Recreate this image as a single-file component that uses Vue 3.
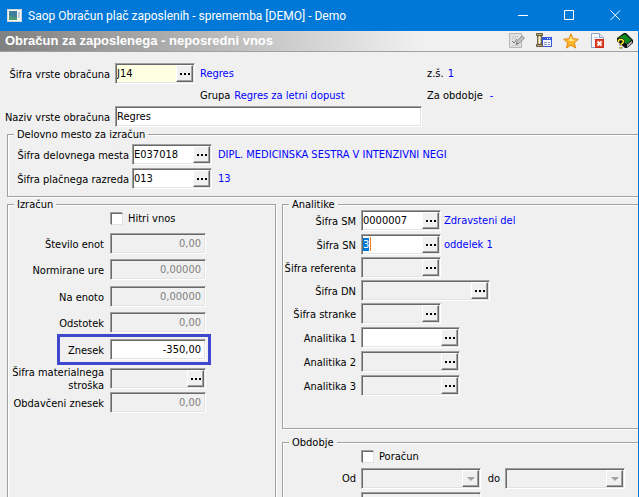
<script setup>
import { ref, onMounted } from 'vue'

const title = 'Saop Obračun plač zaposlenih - sprememba [DEMO] - Demo'

const workplace = ref([
  { id: 'place', label: 'Šifra delovnega mesta', value: 'E037018', info: 'DIPL. MEDICINSKA SESTRA V INTENZIVNI NEGI' },
  { id: 'grade', label: 'Šifra plačnega razreda', value: '013', info: '13' },
])

const amounts = ref([
  { id: 'units', label: 'Število enot', value: '0,00', off: true },
  { id: 'hours', label: 'Normirane ure', value: '0,00000', off: true },
  { id: 'per-unit', label: 'Na enoto', value: '0,00000', off: true },
  { id: 'percent', label: 'Odstotek', value: '0,00', off: true },
  { id: 'amount', label: 'Znesek', value: '-350,00', marked: true },
  { id: 'material', label: 'Šifra materialnega stroška', value: '', off: true, lookup: true },
  { id: 'taxed', label: 'Obdavčeni znesek', value: '0,00', off: true },
])

const analytics = ref([
  { id: 'sm', label: 'Šifra SM', value: '0000007', info: 'Zdravsteni del', size: 'short' },
  { id: 'sn', label: 'Šifra SN', value: '3', info: 'oddelek 1', size: 'short' },
  { id: 'clerk', label: 'Šifra referenta', value: '', off: true, size: 'short' },
  { id: 'dn', label: 'Šifra DN', value: '', off: true, size: 'long' },
  { id: 'client', label: 'Šifra stranke', value: '', off: true, size: 'short' },
  { id: 'a1', label: 'Analitika 1', value: '', size: 'medium' },
  { id: 'a2', label: 'Analitika 2', value: '', off: true, size: 'medium' },
  { id: 'a3', label: 'Analitika 3', value: '', off: true, size: 'medium' },
])

onMounted(() => {
  document.getElementById('sn')?.select()
})
</script>

<template>
  <main class="window">
    <header class="titlebar">
      <svg class="app-icon" viewBox="0 0 15 13" aria-hidden="true">
        <rect width="15" height="13" fill="#d8d8d8" />
        <rect x="1" y="1" width="13" height="11" fill="#f4f4f4" />
        <rect x="2" y="2" width="8" height="9" fill="#3f7f9a" />
        <path d="M2 11V6l3 2 5 1v2z" fill="#4f9a72" />
        <rect x="11" y="3" width="2" height="6" fill="#c4cdd3" />
      </svg>
      <span class="caption">{{ title }}</span>
      <button class="win-btn" type="button" aria-label="Minimiraj">
        <svg viewBox="0 0 11 11"><path d="M0 5.5h10" /></svg>
      </button>
      <button class="win-btn" type="button" aria-label="Maksimiraj">
        <svg viewBox="0 0 11 11"><path d="M.5 .5h9v9h-9z" /></svg>
      </button>
      <button class="win-btn" type="button" aria-label="Zapri">
        <svg viewBox="0 0 11 11"><path d="M.5 .5l9.500 9.500M10 .5L.5 10" /></svg>
      </button>
    </header>

    <div class="toolbar">
      <h1>Obračun za zaposlenega - neposredni vnos</h1>
      <button type="button" aria-label="Uredi" disabled>
        <svg viewBox="0 0 16 16">
          <path d="M.5 .5h12v14H.5z" fill="#e2e2e2" stroke="#b5b5b5" />
          <path d="M3 3.500h6M3 5.500h4M3 12.500h7" stroke="#c9c9c9" />
          <path d="M3 8l2 2 3-4" fill="none" stroke="#777" />
          <path d="M7 11.500l1-3L13 3l2.500 2L10 10.500z" fill="#c3c3c3" stroke="#8b8b8b" />
          <path d="M7 11.500l1-2 1 1z" fill="#666" />
        </svg>
      </button>
      <button type="button" aria-label="Nastavitve okna">
        <svg viewBox="0 0 16 16">
          <path d="M6.500 4.500h9v9h-9z" fill="#f4f7ff" stroke="#3355d8" />
          <path d="M6 4h10v3H6z" fill="#3157e0" />
          <path d="M11 5.500h1M13 5.500h1" stroke="#fff" />
          <path d="M8 9.500h3M8 11.500h3M12 9.500h2M12 11.500h2" stroke="#8a96b8" />
          <path d="M1.500 3h4v8h-4z" fill="#cfc4a2" stroke="#716545" />
          <path d="M.5 .5h6v2h-6zM.5 11.500h6v2h-6z" fill="#b9aa7c" stroke="#655a3c" />
          <path d="M3.500 3v8" stroke="#fff8df" />
        </svg>
      </button>
      <button type="button" aria-label="Priljubljene">
        <svg viewBox="0 0 16 16">
          <path d="M8 .8l2.100 4.900 5.300.5-4 3.500 1.200 5.300L8 12.200 3.400 15l1.200-5.300-4-3.500 5.300-.5z" fill="#ffb52b" stroke="#e28a1b" />
          <path d="M8 3l1.300 3.600 3.600.4-4 1.200L4 7l2.700-.4z" fill="#ffe98a" />
        </svg>
      </button>
      <button type="button" aria-label="Prekliči">
        <svg viewBox="0 0 16 16">
          <path d="M1.500 .5h8l4 4v10h-12z" fill="#f7f9fd" stroke="#93a3c4" />
          <path d="M9.500 .5v4h4" fill="#dfe6f3" stroke="#93a3c4" />
          <path d="M4 4.500h4M4 6.500h3" stroke="#bcc7dc" />
          <path d="M5.500 6.500h8v8h-8z" fill="#e8432c" stroke="#c92a18" />
          <path d="M7.500 8.500l4 4M11.500 8.500l-4 4" stroke="#fff" stroke-width="1.800" />
        </svg>
      </button>
      <button type="button" aria-label="Pomoč">
        <svg viewBox="0 0 16 16">
          <path d="M0 5L7 0h2l7 7v3l-6 5H8L0 8z" fill="#111" />
          <path d="M1 5l7-4 6.500 6L9.500 11z" fill="#0a8a1c" />
          <path d="M10 11.800L15 8v2l-5 4z" fill="#d9d9d9" />
          <path d="M10 13l5-4" stroke="#777" stroke-width=".6" />
          <path d="M1.500 9V7.500L3 6.500h2L6.500 8v1L4 11.500v1M4 14v1.500" fill="none" stroke="#222" stroke-width="2.800" />
          <path d="M1.500 9V7.500L3 6.500h2L6.500 8v1L4 11.500v1M4 14v1.500" fill="none" stroke="#ffe928" stroke-width="1.500" />
        </svg>
      </button>
    </div>

    <form class="body" @submit.prevent>
      <section class="summary">
        <label for="kind">Šifra vrste obračuna</label>
        <div class="field short key">
          <input id="kind" type="text" value="J14">
          <button class="more" type="button" aria-label="Izberi vrsto obračuna"><i /><i /><i /></button>
        </div>
        <output class="info">Regres</output>
        <div class="pair"><span>z.š.</span><output class="info">1</output></div>

        <div class="pair group"><span>Grupa</span><output class="info">Regres za letni dopust</output></div>
        <div class="pair wide"><span>Za obdobje</span><output class="info">-</output></div>

        <label for="name">Naziv vrste obračuna</label>
        <div class="field name"><input id="name" type="text" value="Regres"></div>
      </section>

      <fieldset class="box workplace">
        <legend>Delovno mesto za izračun</legend>
        <div class="rows">
          <template v-for="row in workplace" :key="row.id">
            <label :for="row.id">{{ row.label }}</label>
            <div class="field short">
              <input :id="row.id" v-model="row.value" type="text">
              <button class="more" type="button" :aria-label="row.label"><i /><i /><i /></button>
            </div>
            <output class="info">{{ row.info }}</output>
          </template>
        </div>
      </fieldset>

      <div class="columns">
        <fieldset class="box calc">
          <legend>Izračun</legend>
          <label class="check"><input type="checkbox">Hitri vnos</label>
          <div class="rows">
            <div v-for="row in amounts" :key="row.id" class="amount" :class="{ marked: row.marked }">
              <label :for="row.id">{{ row.label }}</label>
              <div class="field" :class="{ off: row.off }">
                <input :id="row.id" v-model="row.value" class="number" type="text" :disabled="row.off">
                <button v-if="row.lookup" class="more" type="button" :aria-label="row.label"><i /><i /><i /></button>
              </div>
            </div>
          </div>
        </fieldset>

        <div class="side">
          <fieldset class="box analytics">
            <legend>Analitike</legend>
            <div class="rows">
              <template v-for="row in analytics" :key="row.id">
                <label :for="row.id">{{ row.label }}</label>
                <div class="value">
                  <div class="field" :class="[row.size, { off: row.off }]">
                    <input :id="row.id" v-model="row.value" type="text" :disabled="row.off">
                    <button class="more" type="button" :aria-label="row.label"><i /><i /><i /></button>
                  </div>
                  <output v-if="row.info" class="info">{{ row.info }}</output>
                </div>
              </template>
            </div>
          </fieldset>

          <fieldset class="box period">
            <legend>Obdobje</legend>
            <label class="check"><input type="checkbox">Poračun</label>
            <div class="range">
              <label for="from">Od</label>
              <div class="field off date">
                <select id="from" disabled><option value="" /></select>
                <span class="drop" />
              </div>
              <label for="to">do</label>
              <div class="field off date">
                <select id="to" disabled><option value="" /></select>
                <span class="drop" />
              </div>
            </div>
            <div class="range">
              <span />
              <div class="field off date"><input type="text" aria-label="Opis obdobja" disabled></div>
            </div>
          </fieldset>
        </div>
      </div>
    </form>
  </main>
</template>

<style>
body {
  overflow: hidden;
  background: #f0f0f0;
}
</style>

<style scoped>
.window {
  box-sizing: border-box;
  display: flex;
  flex-direction: column;
  height: 100vh;
  overflow: hidden;
  border-right: 1px solid #0078d7;
  background: #f0f0f0;
  color: #000;
  font: 11px/13px "DejaVu Sans Condensed", "DejaVu Sans", sans-serif;
  font-stretch: condensed;
}

button,
input,
select {
  margin: 0;
  padding: 0;
  border: 0;
  border-radius: 0;
  font: inherit;
  color: inherit;
}

.titlebar {
  display: flex;
  flex: none;
  align-items: center;
  height: 31px;
  padding-left: 7px;
  background: #0078d7;
  color: #fff;
  font: 12px/16px Roboto, "Noto Sans", sans-serif;
}

.app-icon {
  width: 15px;
  height: 13px;
}

.caption {
  flex: 1;
  padding-left: 6px;
  white-space: nowrap;
}

.win-btn {
  display: grid;
  place-items: center;
  width: 46px;
  height: 31px;
  background: none;
}

.win-btn svg {
  width: 11px;
  height: 11px;
  fill: none;
  stroke: #fff;
}

.toolbar {
  display: flex;
  flex: none;
  align-items: center;
  height: 20px;
  border-bottom: 1px solid #a0a0a0;
  background: linear-gradient(90deg, #808080, #f0f0f0 420px);
}

.toolbar h1 {
  flex: 1;
  margin: 0;
  padding-left: 5px;
  color: #fff;
  font: bold 13px/18px "Liberation Sans", Arial, sans-serif;
  white-space: nowrap;
}

.toolbar button {
  display: grid;
  place-items: center;
  width: 27px;
  height: 20px;
  background: none;
}

.toolbar svg {
  width: 16px;
  height: 16px;
}

.body {
  flex: none;
  padding-top: 11px;
}

.info {
  color: #00f;
  white-space: nowrap;
}

label,
.pair {
  white-space: nowrap;
}

.field {
  box-sizing: border-box;
  display: flex;
  height: 21px;
  padding: 1px;
  border: 1px solid;
  border-color: #a0a0a0 #fff #fff #a0a0a0;
  background: #fff;
  box-shadow: inset 1px 1px #696969, inset -1px -1px #e3e3e3;
}

.field input,
.field select {
  flex: 1;
  min-width: 0;
  outline: 0;
  appearance: none;
  background: transparent;
}

.field input {
  padding-bottom: 1px;
}

.field .number {
  padding-right: 3px;
  text-align: right;
}

.field.off {
  background: #f0f0f0;
  color: #808080;
}

.field.key {
  background: #ffffe1;
}

.short {
  width: 80px;
}

.medium {
  width: 99px;
}

.long {
  width: 129px;
}

.date {
  width: 120px;
}

.field #sn {
  background: linear-gradient(#f08020, #f08020) 7px 1px / 1px 14px no-repeat;
}

#sn::selection {
  background: #0078d7;
  color: #fff;
}

.more,
.drop {
  box-sizing: border-box;
  display: flex;
  flex: none;
  gap: 2px;
  align-items: center;
  justify-content: center;
  width: 17px;
  border: 1px solid;
  border-color: #fff #696969 #696969 #fff;
  background: #f0f0f0;
  box-shadow: inset -1px -1px #a0a0a0;
}

.more i {
  width: 2px;
  height: 2px;
  background: #000;
}

.drop::before {
  content: "";
  border: 4px solid transparent;
  border-top-color: #a0a0a0;
  border-bottom: 0;
}

.summary {
  display: grid;
  grid-template-columns: 110px 80px 222px 1fr;
  grid-template-rows: 21px 22px 21px;
  column-gap: 5px;
  align-items: center;
}

.summary label {
  padding-top: 1px;
  text-align: right;
}

.pair {
  display: flex;
  gap: 4px;
}

.group {
  grid-column: 2 / 4;
  padding-left: 85px;
}

.wide {
  gap: 7px;
}

.name {
  grid-column: 2 / 4;
}

.box {
  min-width: 0;
  margin: 0;
  padding: 0;
  border: 1px solid #a0a0a0;
  box-shadow: 1px 1px #fff, inset 1px 1px #fff;
}

.box legend {
  margin-left: 6px;
  padding: 0 3px;
  background: #f0f0f0;
  line-height: 11px;
}

.workplace {
  margin: 2px 0 0 7px;
  border-right: 0;
}

.workplace .rows {
  display: grid;
  grid-template-columns: 121px 80px 1fr;
  gap: 3px;
  align-items: center;
  padding: 4px 0 7px;
}

.workplace label {
  padding-top: 1px;
  text-align: right;
}

.workplace .info {
  padding-left: 3px;
}

.columns {
  display: flex;
  gap: 6px;
  padding: 2px 0 0 7px;
}

.calc {
  flex: 0 0 267px;
}

.check {
  display: flex;
  gap: 5px;
  align-items: center;
}

.check input {
  box-sizing: border-box;
  width: 12px;
  height: 12px;
  border: 1px solid;
  border-color: #696969 #e3e3e3 #e3e3e3 #696969;
  appearance: none;
  background: #fff;
  box-shadow: -1px -1px #a0a0a0;
}

.calc .check {
  padding: 2px 0 8px 103px;
}

.calc .rows {
  display: grid;
  grid-template-columns: 96px 96px;
  grid-auto-rows: 26px 27px;
  column-gap: 6px;
}

.amount {
  position: relative;
  display: grid;
  grid-column: 1 / 3;
  grid-template-columns: subgrid;
  align-items: center;
  height: 21px;
}

.amount label {
  padding-top: 1px;
  text-align: right;
  white-space: normal;
}

.marked::after {
  position: absolute;
  inset: -5px -5px -5px 49px;
  border: 3px solid #3f48cc;
  content: "";
  pointer-events: none;
}

.side {
  flex: 1;
  min-width: 0;
}

.analytics,
.period {
  border-right: 0;
}

.analytics .rows {
  display: grid;
  grid-template-columns: 73px 1fr;
  grid-template-rows: 24px repeat(3, 23px) repeat(4, 24px);
  column-gap: 5px;
  padding-bottom: 29px;
}

.analytics label {
  padding-top: 5px;
  text-align: right;
}

.value {
  display: flex;
  gap: 3px;
  align-items: center;
  height: 21px;
}

.period {
  margin-top: 8px;
}

.period .check {
  padding: 2px 0 5px 79px;
}

.range {
  display: grid;
  grid-template-columns: 73px 120px 14px 120px;
  column-gap: 5px;
  align-items: center;
  padding-bottom: 3px;
}

.range label {
  text-align: right;
}
</style>
